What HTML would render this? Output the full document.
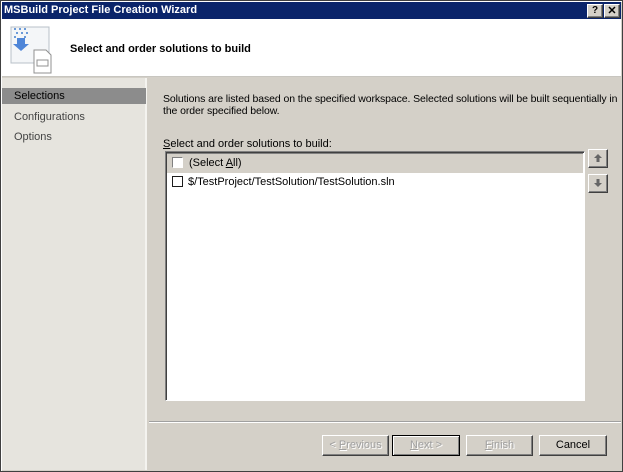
<!DOCTYPE html>
<html><head><style>
*{margin:0;padding:0;box-sizing:border-box}
body{width:623px;height:472px;overflow:hidden;font-family:"Liberation Sans",sans-serif;font-size:11px;background:#d4d0c8;position:relative;color:#000}
.a{position:absolute;white-space:nowrap}
.btn{position:absolute;height:21px;background:#d4d0c8;border:1px solid;border-color:#fff #404040 #404040 #fff;box-shadow:inset -1px -1px 0 #808080;text-align:center;line-height:19px;font-size:11px}
.dis{color:#a0a0a0;text-shadow:1px 1px 0 #fff}
.cb{position:absolute;width:11px;height:11px;border:1px solid #1c1c1c;background:#fff}
</style></head><body>
<div class="a" style="left:0;top:0;width:623px;height:472px;border:1px solid #404040;box-shadow:inset 1px 1px 0 #fff"></div>
<div class="a" style="left:2px;top:2px;width:619px;height:17px;background:#0a246a;color:#fff;font-weight:bold;font-size:11px;line-height:17px;padding-left:2px">MSBuild Project File Creation Wizard</div>
<div class="btn" style="left:587px;top:4px;width:16px;height:14px;line-height:12px;font-weight:bold;font-size:10px">?</div>
<div class="btn" style="left:604px;top:4px;width:16px;height:14px;line-height:12px;font-weight:bold;font-size:11px">✕</div>
<div class="a" style="left:2px;top:19px;width:619px;height:58px;background:#fff;border-bottom:1px solid #c8c6c0"></div>
<svg class="a" style="left:8px;top:24px" width="48" height="50">
<rect x="3" y="3" width="38" height="36" fill="#f4f6f8" stroke="#b8c0c8"/>
<g fill="#6b9ad8"><rect x="6" y="4" width="2" height="2"/><rect x="11" y="4" width="2" height="2"/><rect x="16" y="4" width="2" height="2"/><rect x="8" y="8" width="2" height="2"/><rect x="13" y="8" width="2" height="2"/><rect x="18" y="8" width="2" height="2"/><rect x="6" y="12" width="2" height="2"/><rect x="16" y="12" width="2" height="2"/></g>
<path d="M9 14h8v6h4l-8 7l-8-7h4z" fill="#4f86d8"/>
<path d="M26 26h12l5 5v18h-17z" fill="#fff" stroke="#909090"/>
<rect x="29" y="36" width="11" height="6" fill="none" stroke="#909090"/>
</svg>
<div class="a" style="left:70px;top:43px;font-weight:bold;font-size:11px">Select and order solutions to build</div>
<div class="a" style="left:2px;top:78px;width:145px;height:392px;background:#e6e4de;border-right:2px solid #f4f3ef"></div>
<div class="a" style="left:2px;top:88px;width:144px;height:16px;background:#8c8c8c;color:#000;padding-left:12px;line-height:16px">Selections</div>
<div class="a" style="left:14px;top:111px;color:#444">Configurations</div>
<div class="a" style="left:14px;top:131px;color:#444">Options</div>
<div class="a" style="left:163px;top:93px;line-height:12px;font-size:10.5px;letter-spacing:-0.1px">Solutions are listed based on the specified workspace. Selected solutions will be built sequentially in<br>the order specified below.</div>
<div class="a" style="left:163px;top:138px"><u>S</u>elect and order solutions to build:</div>
<div class="a" style="left:165px;top:151px;width:420px;height:250px;background:#fff;border:1px solid;border-color:#808080 #fff #fff #808080;box-shadow:inset 1px 1px 0 #404040"></div>
<div class="a" style="left:167px;top:153px;width:416px;height:20px;background:#d4d0c8;border-top:1px solid #808080"></div>
<div class="cb" style="left:172px;top:157px;border-color:#808080 #fff #fff #808080;"></div>
<div class="a" style="left:189px;top:157px">(Select <u>A</u>ll)</div>
<div class="cb" style="left:172px;top:176px"></div>
<div class="a" style="left:188px;top:176px">$/TestProject/TestSolution/TestSolution.sln</div>
<div class="btn" style="left:588px;top:149px;width:20px;height:19px"></div>
<div class="btn" style="left:588px;top:174px;width:20px;height:19px"></div>
<svg class="a" style="left:593px;top:153px" width="10" height="10"><path d="M5 1L1 5h2.5v4h3V5H9z" fill="#666"/></svg>
<svg class="a" style="left:593px;top:178px" width="10" height="10"><path d="M5 9L1 5h2.5V1h3v4H9z" fill="#666"/></svg>
<div class="a" style="left:149px;top:421px;width:472px;height:2px;border-top:1px solid #a0a0a0;border-bottom:1px solid #fff"></div>
<div class="btn dis" style="left:322px;top:435px;width:67px"><span>&lt; <u>P</u>revious</span></div>
<div class="btn dis" style="left:392px;top:435px;width:68px;border:1px solid #000;box-shadow:inset 1px 1px 0 #fff,inset -1px -1px 0 #808080"><u>N</u>ext &gt;</div>
<div class="btn dis" style="left:466px;top:435px;width:67px"><u>F</u>inish</div>
<div class="btn" style="left:539px;top:435px;width:68px">Cancel</div>
</body></html>
